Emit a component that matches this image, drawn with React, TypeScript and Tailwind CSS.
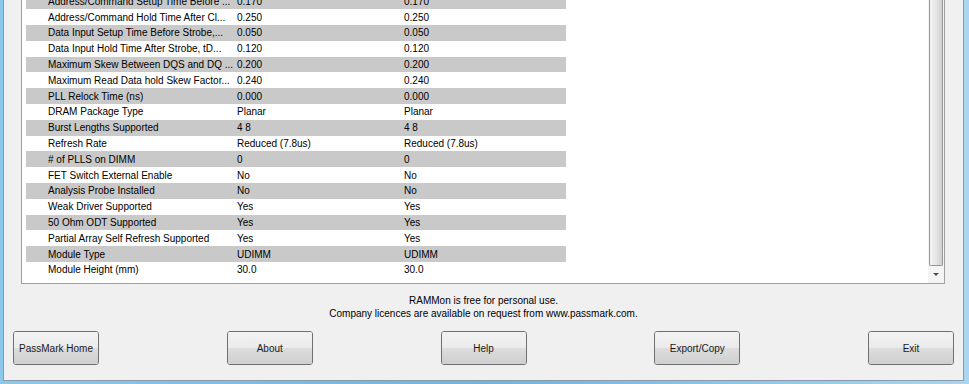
import React from 'react'

type Row = { name: string; a: string; b: string }

const rows: Row[] = [
  { name: 'Address/Command Setup Time Before ...', a: '0.170', b: '0.170' },
  { name: 'Address/Command Hold Time After Cl...', a: '0.250', b: '0.250' },
  { name: 'Data Input Setup Time Before Strobe,...', a: '0.050', b: '0.050' },
  { name: 'Data Input Hold Time After Strobe, tD...', a: '0.120', b: '0.120' },
  { name: 'Maximum Skew Between DQS and DQ ...', a: '0.200', b: '0.200' },
  { name: 'Maximum Read Data hold Skew Factor...', a: '0.240', b: '0.240' },
  { name: 'PLL Relock Time (ns)', a: '0.000', b: '0.000' },
  { name: 'DRAM Package Type', a: 'Planar', b: 'Planar' },
  { name: 'Burst Lengths Supported', a: '4 8', b: '4 8' },
  { name: 'Refresh Rate', a: 'Reduced (7.8us)', b: 'Reduced (7.8us)' },
  { name: '# of PLLS on DIMM', a: '0', b: '0' },
  { name: 'FET Switch External Enable', a: 'No', b: 'No' },
  { name: 'Analysis Probe Installed', a: 'No', b: 'No' },
  { name: 'Weak Driver Supported', a: 'Yes', b: 'Yes' },
  { name: '50 Ohm ODT Supported', a: 'Yes', b: 'Yes' },
  { name: 'Partial Array Self Refresh Supported', a: 'Yes', b: 'Yes' },
  { name: 'Module Type', a: 'UDIMM', b: 'UDIMM' },
  { name: 'Module Height (mm)', a: '30.0', b: '30.0' },
]

const buttons = ['PassMark Home', 'About', 'Help', 'Export/Copy', 'Exit']

function WinButton({ label }: { label: string }) {
  return (
    <button className="relative w-[86px] h-[34px] rounded-[3px] border border-[#707070] overflow-hidden text-[10px] text-[#1a1a1a] shadow-[inset_0_0_0_1px_#fcfcfc]">
      <span className="absolute inset-x-0 top-0 h-1/2 bg-gradient-to-b from-[#f2f2f2] to-[#ebebeb]" />
      <span className="absolute inset-x-0 bottom-0 h-1/2 bg-gradient-to-b from-[#dddddd] to-[#cfcfcf]" />
      <span className="relative">{label}</span>
    </button>
  )
}

export default function App() {
  return (
    <div
      className="w-[969px] h-[384px] overflow-hidden flex pl-[3px] pr-[5px] pb-[3px] bg-gradient-to-r from-[#8cc8ea] via-[#6fb3df] to-[#a9d6f0]"
      style={{ fontFamily: '"Liberation Sans", Arial, sans-serif' }}
    >
      <div className="flex-1 flex flex-col bg-[#f0f0f0] border-l border-r border-b border-[#8a9aa8]">
        {/* list view */}
        <div className="ml-[17px] w-[924px] h-[284px] flex bg-white border-l border-r border-b border-[#a0a0a0] overflow-hidden">
          <div className="flex-1 overflow-hidden">
            <div className="mt-[-6.5px] flex flex-col">
              {rows.map((r, i) => (
                <div
                  key={r.name}
                  className={`ml-[4px] w-[540px] h-[15.8px] flex items-center text-[10px] text-black whitespace-nowrap ${
                    i % 2 === 0 ? 'bg-[#c9c9c9]' : 'bg-white'
                  }`}
                >
                  <span className="w-[211px] pl-[22px] pr-[4px] overflow-hidden">{r.name}</span>
                  <span className="w-[167px] overflow-hidden">{r.a}</span>
                  <span className="flex-1 overflow-hidden">{r.b}</span>
                </div>
              ))}
            </div>
          </div>
          {/* scrollbar */}
          <div className="w-[16px] flex flex-col bg-[#f4f4f4]">
            <div className="flex-1 ml-[1px] w-[14px] rounded-b-[2px] border border-t-0 border-[#979797] bg-gradient-to-r from-[#f4f4f4] via-[#e6e6e6] to-[#cfcfcf]" />
            <div className="h-[17px] flex items-center justify-center">
              <span className="w-0 h-0 border-l-[3px] border-r-[3px] border-t-[3px] border-l-transparent border-r-transparent border-t-[#4d4d4d]" />
            </div>
          </div>
        </div>

        {/* notice */}
        <div className="mt-[10px] flex flex-col items-center text-[10px] leading-[13px] text-black">
          <span>RAMMon is free for personal use.</span>
          <span>Company licences are available on request from www.passmark.com.</span>
        </div>

        {/* buttons */}
        <div className="mt-[11px] pl-[9px] pr-[9px] flex justify-between">
          {buttons.map((b) => (
            <WinButton key={b} label={b} />
          ))}
        </div>
      </div>
    </div>
  )
}
